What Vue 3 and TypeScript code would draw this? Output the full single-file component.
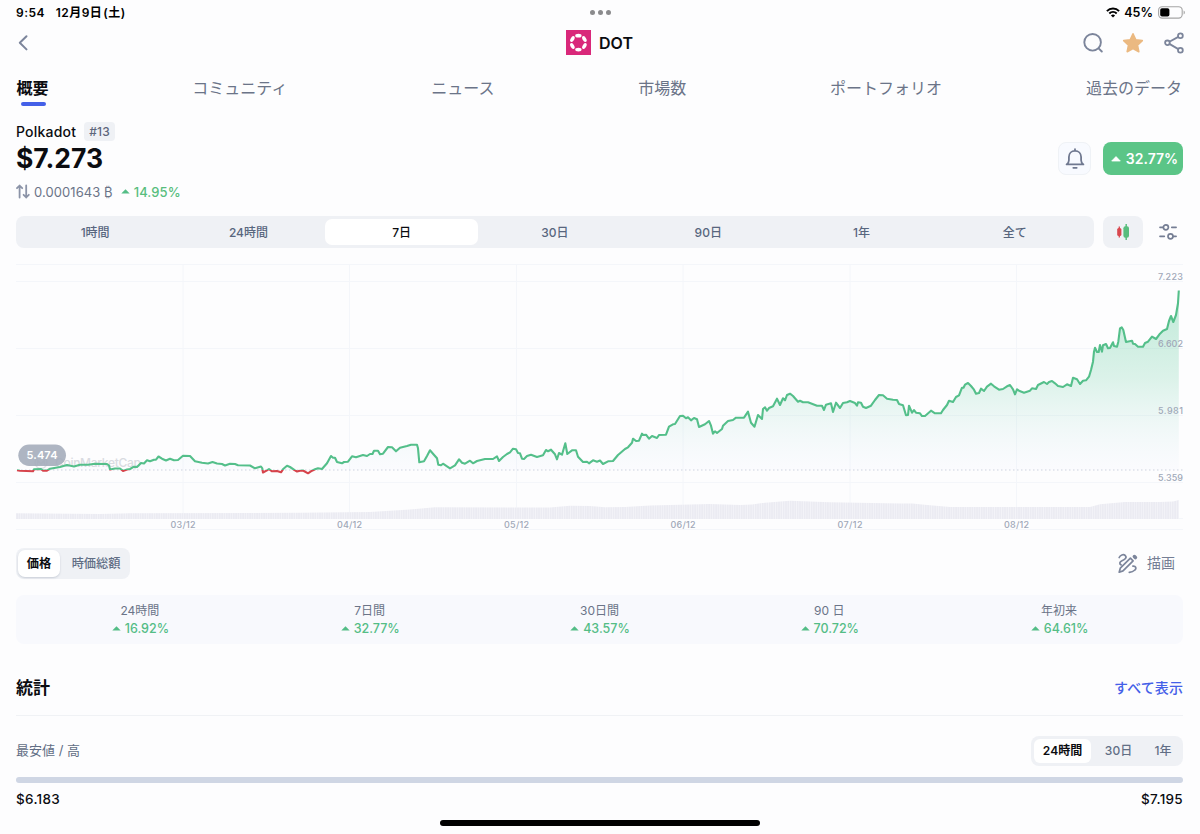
<script setup lang="ts">
interface Change {
  label: string
  value: string
}

const tabs: string[] = ['概要', 'コミュニティ', 'ニュース', '市場数', 'ポートフォリオ', '過去のデータ']
const ranges: string[] = ['1時間', '24時間', '7日', '30日', '90日', '1年', '全て']
const changes: Change[] = [
  { label: '24時間', value: '16.92%' },
  { label: '7日間', value: '32.77%' },
  { label: '30日間', value: '43.57%' },
  { label: '90 日', value: '70.72%' },
  { label: '年初来', value: '64.61%' },
]
const statRanges: string[] = ['24時間', '30日', '1年']

const dates = [
  { x: 183, label: '03/12' },
  { x: 349.5, label: '04/12' },
  { x: 516.5, label: '05/12' },
  { x: 683, label: '06/12' },
  { x: 850, label: '07/12' },
  { x: 1016.5, label: '08/12' },
]
const levels = [
  { y: 281.5, label: '7.223' },
  { y: 348.5, label: '6.602' },
  { y: 415.5, label: '5.981' },
  { y: 482.5, label: '5.359' },
]

const baseline = 470

const price =
  '17,470.3 20,470.8 33,471.3 34,469.3 41,469 43,470.6 47,470.6 50,468.7 60,467 67,465 74,466.5 80,464.7 88,464.7 95,463.7 107,464 109,465.5 110,469.5 115,468.5 120,468.5 123,470.9 127,469.5 130,469 134,466.7 137,467 141,463 144,463.5 147,460.3 150,461.3 154,459.7 156,459.7 158.5,456.5 162,458.7 166,460.5 170,458.7 174,460.3 178,460 183,455.8 190,456 195,461.3 202,462.7 208,463.5 212.5,462 217,463.5 222,464 225,465.5 230,463.7 235,464 238,465.3 250,465.5 255,468.3 261,466.5 262.3,468.3 263,472.5 267,470.4 269,469 272,471.3 277,471 281,472.3 283.5,468.7 287,465.7 290,467 295,470.3 297,471.5 300,470.7 303,470.5 308,473.3 312,470.7 315,469.3 318,468.3 322,469 327,463.3 331,456 333,457.7 335,457.7 337,462 342,463.3 344,462 348,461.7 352,456.3 356,457.3 363,455 367,456 370,454 372.5,454 374,450.7 378,450.7 380,454.3 383,453.7 388,447 392,447.3 396,451.3 400,447.7 407,446 411,444.7 417,444.7 418,448.3 419.3,462.3 424,461.3 427,456 430,450.3 433,453.7 437,458.3 438.3,464.7 441,465.3 443,463.7 447,466.3 450,468.3 455,465.3 459,459.3 462,462.7 465,463.7 470,460.7 473,463.3 477,461 485,459 493,459 497,456.3 499,461 503,457 507,454 510,452.3 513,448.7 516,449.3 518,453 520,453.3 522,458.7 524,459 527,456 531,454.7 537,457 543,455.3 546,450 548,451.3 551,449.7 555,454.3 557,459.3 559,453 562,454.7 565.3,443.3 567.3,454 572,450.3 576,450.3 578,456.7 583,462 587,461.7 589,463.3 593,460.3 597,461.7 600,460.5 603,464 608,461.3 613,461 618,455 625,449 628,447.3 632,442.7 633,438.7 636,441 639,440.7 642,433.7 643,435 646,434.7 649,438.7 652,436 657,438 659,435 666,434.7 669,426.7 673,424.3 675,424 680,416 683,415.7 686,418.3 688,417.3 691,420.3 694,418 697,419.3 699,427 705,424.3 709,421 711,425.7 713,433.7 715,431.3 717,433 722,429 723,425.7 728,421 733,420 736,417.7 744,417.7 748,411.7 751,422.7 754.5,426.7 758,415 762,419 763,409 765,407.3 767,410.7 769,408 773,406.3 777,398.7 780,405 783,398.3 785,400.3 787,395 790,393.7 793,396 798,401.7 800,400.7 803,402.3 808,402.3 817,405.7 822,405.7 824,410 826,404.7 831,403.3 833,412 836,402.7 840,408 843,403 847,402.3 850,401 855,403 857,405.7 858,402.3 861,402.7 863,406.7 866,408 871,405.7 875,400 879,395 883,395.3 887,398.7 893,399.7 897,400 899,404 903,405.3 906,415.3 908,415 909,405.7 912,412.7 914,410 916,412.7 920,413.3 922,416 925,416 931,410.7 935,413.3 941,413.3 943,410 947,405 949,400.7 953,402 956,397 959,395.3 962,387.7 963.5,387.7 965,384.7 968,383 971,386 974,389.7 976,393.7 979,393 981,388.7 984,391 987,386.7 991,383.7 994,386.3 999,389.7 1003,389 1007,386.3 1010,385 1013,389.3 1015,394.3 1017,389.3 1019,390.7 1024,392.7 1030,390.7 1032,388.3 1036,389 1038,385 1044,382 1047,384 1049,382 1052,381 1055,383.3 1058,386 1063,387 1067,384.3 1071,386 1073,377.7 1077,379.3 1080,384 1083,380.7 1086,380.3 1089,376.7 1091,370 1093,361.7 1094,351.7 1095,347.7 1097,352 1098.7,352 1100,345 1102,351.7 1103,345.3 1106,344 1108,348.3 1110,348 1113,342.3 1114,346 1117,346.7 1118.3,341.7 1120,328.3 1121.7,327.3 1123.3,330 1126,342 1132,340.7 1133,343.7 1135,344 1138,346.7 1143,346.7 1145,343 1148,341.7 1152,336.7 1156,339 1160,333.7 1163,330.7 1167,329 1169,321 1171,316 1173.3,322 1176,315 1178,303.3 1178.8,290.5'

const area = `17,${baseline} ${price} 1178.8,${baseline}`

const volume =
  '16,513.3 100,514 130,513.3 300,512.8 370,512 410,509.5 435,507.3 550,507.6 570,505.7 590,506 605,507.3 625,507 650,505.4 710,504 740,505 752,504.6 765,502.7 790,500.7 830,502.3 900,503.5 912,503.4 930,505.3 950,507 1090,507 1100,504.3 1125,502 1160,502 1173,501.4 1179,500'
</script>

<template>
  <main class="screen">
    <div class="status">
      <div class="status-left"><span>9:54</span><span class="date">12月9日<i>(土)</i></span></div>
      <div class="dots"><b></b><b></b><b></b></div>
      <div class="status-right">
        <svg width="14" height="11" viewBox="0 0 14 11">
          <g fill="none" stroke="#000" stroke-width="2">
            <path d="M0.9 4.1a8.7 8.7 0 0 1 12.2 0" />
            <path d="M3.3 6.5a5.3 5.3 0 0 1 7.4 0" />
          </g>
          <path d="M7 10.6L4.9 8.5a3 3 0 0 1 4.2 0z" />
        </svg>
        <span>45%</span>
        <svg width="28" height="13" viewBox="0 0 28 13">
          <rect x="0.6" y="0.7" width="23.6" height="11.4" rx="3.6" fill="none" stroke="#a5a5a5" stroke-width="1.1" />
          <rect x="2.2" y="2.3" width="9.2" height="8.2" rx="1.8" />
          <path d="M25.6 4.4c1.7.6 1.7 3.4 0 4z" fill="#a5a5a5" />
        </svg>
      </div>
    </div>

    <header class="header">
      <svg class="back" width="12" height="18" viewBox="0 0 12 18">
        <path d="M9.5 2.2L2.8 8.8l6.7 6.6" fill="none" stroke="#7c859b" stroke-width="2" stroke-linecap="round" stroke-linejoin="round" />
      </svg>
      <div class="coin">
        <svg width="25" height="25" viewBox="0 0 25 25">
          <rect width="25" height="25" fill="#d9287a" />
          <g fill="#fff">
            <ellipse cx="12.4" cy="5.7" rx="3.2" ry="1.9" />
            <ellipse cx="12.4" cy="19.6" rx="3.2" ry="1.9" />
            <ellipse cx="6.4" cy="9.1" rx="3.2" ry="1.8" transform="rotate(-60 6.4 9.1)" />
            <ellipse cx="18.4" cy="9.1" rx="3.2" ry="1.8" transform="rotate(60 18.4 9.1)" />
            <ellipse cx="6.4" cy="16.1" rx="3.2" ry="1.8" transform="rotate(60 6.4 16.1)" />
            <ellipse cx="18.4" cy="16.1" rx="3.2" ry="1.8" transform="rotate(-60 18.4 16.1)" />
          </g>
        </svg>
        <span>DOT</span>
      </div>
      <div class="actions">
        <svg width="20" height="20" viewBox="0 0 20 20" fill="none" stroke="#7c859b" stroke-width="1.9" stroke-linecap="round">
          <circle cx="9.6" cy="9.3" r="8.3" />
          <path d="M15.6 15.3l3.2 3.2" />
        </svg>
        <svg width="22" height="22" viewBox="0 0 22 22">
          <path d="M11 1.8l2.8 6 6.5.8-4.8 4.5 1.3 6.6L11 16.5l-5.8 3.2 1.3-6.6L1.700 8.600l6.500-.8z" fill="#ebb981" stroke="#ebb981" stroke-width="1.6" stroke-linejoin="round" />
        </svg>
        <svg width="20" height="22" viewBox="0 0 20 22" fill="none" stroke="#7c859b" stroke-width="1.8">
          <circle cx="3.4" cy="10.8" r="2.3" />
          <circle cx="16.4" cy="3.7" r="2.4" />
          <circle cx="16.4" cy="18.3" r="2.4" />
          <path d="M5.4 9.7l8.9-4.8M5.4 11.9l8.9 5.2" />
        </svg>
      </div>
    </header>

    <nav class="tabs">
      <span v-for="(tab, i) in tabs" :key="tab" :class="{ active: i === 0 }">{{ tab }}</span>
    </nav>

    <section class="summary">
      <div class="quote">
        <div class="name"><span>Polkadot</span><em>#13</em></div>
        <div class="price">$7.273</div>
        <div class="btc">
          <svg width="14" height="15" viewBox="0 0 14 15" fill="none" stroke="#8b93a7" stroke-width="1.8" stroke-linecap="round" stroke-linejoin="round">
            <path d="M3.6 13.6V1.6M1 4.2l2.6-2.7 2.6 2.7M10.2 1.4v12M7.6 10.8l2.6 2.7 2.6-2.7" />
          </svg>
          <span>0.0001643 ₿</span>
          <svg class="up" width="9" height="5" viewBox="0 0 9 5"><path d="M4.5.2L8.7 4.6H.3z" /></svg>
          <strong>14.95%</strong>
        </div>
      </div>
      <div class="summary-actions">
        <div class="bell">
          <svg width="20" height="22" viewBox="0 0 20 22" fill="none" stroke="#6f7890" stroke-width="1.8" stroke-linecap="round" stroke-linejoin="round">
            <path d="M10 1.2v1.6M1.6 16.4h16.8c-1.6-1.1-2.3-2.4-2.3-4.2V9c0-3.7-2.6-6.2-6.1-6.2S3.9 5.3 3.9 9v3.2c0 1.8-.7 3.1-2.3 4.2zM8.3 19.8h3.4" />
          </svg>
        </div>
        <div class="badge">
          <svg width="10" height="6" viewBox="0 0 10 6"><path d="M5 .6L9.3 5H.7z" fill="#fff" stroke="#fff" stroke-width=".8" stroke-linejoin="round" /></svg>
          <span>32.77%</span>
        </div>
      </div>
    </section>

    <section class="controls">
      <div class="segments">
        <span v-for="range in ranges" :key="range" :class="{ active: range === '7日' }">{{ range }}</span>
      </div>
      <div class="candles">
        <svg width="14" height="18" viewBox="0 0 14 18">
          <path d="M3.3 3.4v11.2" stroke="#d9474e" stroke-width="1.3" />
          <rect x="1.2" y="5" width="4.2" height="8" rx="1.6" fill="#d9474e" />
          <path d="M10.2 1v16" stroke="#58bd7d" stroke-width="1.5" />
          <rect x="7.4" y="3.2" width="5.6" height="11.6" rx="2" fill="#58bd7d" />
        </svg>
      </div>
      <svg class="sliders" width="18" height="18" viewBox="0 0 18 18" fill="none" stroke="#757e94" stroke-width="1.7" stroke-linecap="round">
        <circle cx="6.9" cy="4.3" r="2.5" />
        <circle cx="11.5" cy="13.3" r="2.5" />
        <path d="M1 4.3h3M12.8 4.3h4.3M1 13.3h4.3M14.3 13.3h2.8" />
      </svg>
    </section>

    <svg class="chart" width="1200" height="280" viewBox="0 258 1200 280">
      <defs>
        <linearGradient id="fill" x1="0" y1="290" x2="0" y2="470" gradientUnits="userSpaceOnUse">
          <stop offset="0" stop-color="#4fc593" stop-opacity=".36" />
          <stop offset="0.5" stop-color="#4fc593" stop-opacity=".19" />
          <stop offset="1" stop-color="#dfe6ff" stop-opacity=".08" />
        </linearGradient>
        <linearGradient id="stroke" x1="0" y1="290" x2="0" y2="650" gradientUnits="userSpaceOnUse">
          <stop offset="0.5" stop-color="#54bf8a" />
          <stop offset="0.5" stop-color="#d6434b" />
        </linearGradient>
        <pattern id="bars" width="2.33" height="40" patternUnits="userSpaceOnUse">
          <rect width="2.33" height="40" fill="#f3f3f8" />
          <rect width="1.5" height="40" fill="#ebebf2" />
        </pattern>
      </defs>
      <g stroke="#f4f6fa" stroke-width="1">
        <path d="M16 264.5H1183M16 529.5H1183M16 518.5H1183" />
        <path v-for="level in levels" :key="level.y" :d="`M16 ${level.y}H1183`" />
        <path v-for="date in dates" :key="date.x" :d="`M${date.x} 264V519`" />
      </g>
      <g class="watermark">
        <circle cx="41" cy="462.5" r="6" />
        <path d="M37.5 465v-5l3.5 4 3.5-4v5" />
        <text x="55" y="467" textLength="86">CoinMarketCap</text>
      </g>
      <polygon :points="`16,519 ${volume} 1179,519`" fill="url(#bars)" />
      <polygon :points="area" fill="url(#fill)" />
      <path :d="`M17 ${baseline}H1183`" stroke="#cdd3df" stroke-width="1" stroke-dasharray="1.5 2.5" />
      <polyline :points="price" fill="none" stroke="url(#stroke)" stroke-width="2.1" stroke-linejoin="round" />
      <rect x="18.3" y="444.5" width="47.7" height="21.5" rx="10.75" fill="#a3abba" fill-opacity=".88" />
      <text class="tag" x="42" y="458.9" text-anchor="middle" textLength="31">5.474</text>
      <g class="axis">
        <text v-for="level in levels" :key="level.label" x="1183" :y="level.y - 1.8" text-anchor="end" textLength="25">{{ level.label }}</text>
        <text v-for="date in dates" :key="date.label" :x="date.x" y="528" text-anchor="middle" textLength="25">{{ date.label }}</text>
      </g>
    </svg>

    <section class="toolbar">
      <div class="toggle">
        <span class="active">価格</span>
        <span>時価総額</span>
      </div>
      <div class="draw">
        <svg width="22" height="22" viewBox="0 0 22 22" fill="none" stroke="#7c859b" stroke-width="1.7" stroke-linecap="round" stroke-linejoin="round">
          <path d="M2.2 4.5C3.2 2 6.4.9 8.2 2.5c2.3 2.2-.6 4-3.2 5.2-2.6 1.2-2.9 3.4-.9 4.2" />
          <path d="M3.3 15.2L13.4 5.1l2.7 2.7L6 17.9l-3.8 1.3z" />
          <path d="M17.4 3.6l1 1" stroke-width="3.6" />
          <path d="M15.9 13.2c3-.3 3.9 2.2 2 3.8-1.6 1.5-3.7 2.2-5.6 2.4" />
        </svg>
        <span>描画</span>
      </div>
    </section>

    <section class="changes">
      <div v-for="change in changes" :key="change.label" class="change">
        <span>{{ change.label }}</span>
        <strong>
          <svg class="up" width="9" height="5" viewBox="0 0 9 5"><path d="M4.5.2L8.7 4.6H.3z" /></svg>{{ change.value }}
        </strong>
      </div>
    </section>

    <section class="stats-head">
      <h2>統計</h2>
      <a>すべて表示</a>
    </section>

    <section class="low-high">
      <span class="caption">最安値 / 高</span>
      <div class="stat-ranges">
        <span v-for="(range, i) in statRanges" :key="range" :class="{ active: i === 0 }">{{ range }}</span>
      </div>
    </section>
    <div class="bar"></div>
    <div class="bounds"><span>$6.183</span><span>$7.195</span></div>
    <div class="home"></div>
  </main>
</template>

<style>
body {
  margin: 0;
  background: #fdfdfe;
}
</style>

<style scoped>
.screen {
  box-sizing: border-box;
  width: 1200px;
  height: 834px;
  overflow: hidden;
  display: flex;
  flex-direction: column;
  background: #fdfdfe;
  color: #0b0c10;
  font-family: Inter, "Noto Sans CJK JP", sans-serif;
}
svg {
  display: block;
  flex: none;
}
.status {
  flex: none;
  display: grid;
  grid-template-columns: 1fr auto 1fr;
  align-items: center;
  height: 25px;
  padding: 0 16px;
  font-size: 12px;
  font-weight: 600;
  line-height: 16px;
  color: #000;
}
.status-left {
  display: flex;
  gap: 11px;
  letter-spacing: 0.45px;
}
.date i {
  font-style: normal;
  margin-left: 1px;
}
.dots {
  display: flex;
  gap: 3px;
}
.dots b {
  width: 5px;
  height: 5px;
  border-radius: 50%;
  background: #8b8b8d;
}
.status-right {
  display: flex;
  justify-content: flex-end;
  align-items: center;
  gap: 5px;
  margin-right: -2px;
}
.status-right span {
  margin-left: -1px;
  font-size: 12.5px;
}
.header {
  flex: none;
  display: grid;
  grid-template-columns: 1fr auto 1fr;
  align-items: center;
  height: 35px;
  margin-bottom: 1px;
  padding: 0 17px 0 16px;
}
.back {
  margin-left: 1px;
}
.coin {
  display: flex;
  align-items: center;
  gap: 8px;
  font-size: 16px;
  font-weight: 600;
  line-height: 24px;
}
.actions {
  display: flex;
  justify-content: flex-end;
  align-items: center;
  gap: 20px;
  margin-right: -1px;
}
.actions svg:first-child {
  margin-right: -1px;
}
.tabs {
  flex: none;
  display: flex;
  justify-content: space-between;
  height: 54px;
  padding: 0 18px 0 16.5px;
  font-size: 16px;
  line-height: 55px;
  color: #6b7488;
}
.tabs .active {
  position: relative;
  font-weight: 700;
  color: #0b0c10;
}
.tabs .active::after {
  content: "";
  position: absolute;
  left: 4px;
  bottom: 9px;
  width: 25px;
  height: 4px;
  border-radius: 2px;
  background: #4460e8;
}
.summary {
  flex: none;
  display: flex;
  justify-content: space-between;
  height: 101px;
  padding: 6px 17px 0 16px;
  box-sizing: border-box;
}
.name {
  display: flex;
  align-items: center;
  gap: 8px;
  height: 20px;
  font-size: 14px;
  font-weight: 500;
  letter-spacing: 0.2px;
}
.name em {
  padding: 0 5px;
  border-radius: 4px;
  background: #eff1f5;
  font-size: 12px;
  font-style: normal;
  line-height: 19px;
  color: #5d667b;
}
.price {
  height: 34px;
  font-size: 26.5px;
  font-weight: 700;
  line-height: 35px;
}
.btc {
  display: flex;
  align-items: center;
  height: 33px;
  font-size: 13px;
  letter-spacing: 0.08px;
  color: #6b7488;
}
.btc span {
  margin: 0 8px 0 4px;
}
.btc strong {
  margin-left: 4px;
  font-weight: 500;
  color: #58bd7d;
}
.up {
  fill: #54bd86;
}
.summary-actions {
  display: flex;
  gap: 12px;
  padding-top: 21px;
}
.bell,
.badge {
  display: flex;
  align-items: center;
  justify-content: center;
  box-sizing: border-box;
  height: 33px;
  border-radius: 8px;
}
.bell {
  width: 33px;
  border: 1px solid #eff2f6;
  background: #f8faff;
}
.badge {
  width: 80px;
  padding-left: 3px;
  gap: 5px;
  background: #5bc587;
  color: #fff;
  font-size: 14px;
  font-weight: 600;
}
.controls {
  flex: none;
  display: flex;
  align-items: center;
  height: 32px;
  padding: 0 16px;
}
.segments {
  display: flex;
  box-sizing: border-box;
  width: 1078px;
  height: 32px;
  padding: 3px 2.5px;
  border-radius: 8px;
  background: #eff1f5;
}
.segments span {
  flex: 1;
  border-radius: 7px;
  font-size: 12px;
  font-weight: 500;
  line-height: 27px;
  text-align: center;
  color: #58667e;
}
.segments .active {
  background: #fff;
  color: #0b0c10;
}
.candles {
  display: flex;
  align-items: center;
  justify-content: center;
  width: 40px;
  height: 32px;
  margin-left: 9px;
  border-radius: 8px;
  background: #eff1f5;
}
.sliders {
  margin-left: 16px;
}
.chart {
  margin-top: 10px;
}
.watermark {
  fill: none;
  stroke: #dfe1e6;
  stroke-width: 1.5;
}
.watermark text {
  fill: #d9dbe1;
  stroke: none;
  font-size: 12px;
  font-weight: 500;
}
.tag {
  fill: #fff;
  font-size: 11px;
  font-weight: 600;
}
.axis {
  fill: #a0a8b8;
  font-size: 9px;
  font-weight: 500;
}
.toolbar {
  flex: none;
  display: flex;
  justify-content: space-between;
  align-items: center;
  height: 31px;
  margin-top: 10px;
  padding: 0 24px 0 16px;
}
.toggle {
  display: flex;
  box-sizing: border-box;
  width: 114px;
  height: 31px;
  padding: 2px;
  border-radius: 8px;
  background: #eff1f5;
  font-size: 12.2px;
  font-weight: 500;
  line-height: 28px;
  text-align: center;
  color: #616e85;
}
.toggle span {
  flex: 1;
  padding-left: 4px;
}
.toggle .active {
  flex: 0 0 42px;
  padding: 0;
  border-radius: 7px;
  background: #fff;
  box-shadow: 0 1px 2px rgba(88, 102, 126, 0.25);
  font-weight: 600;
  color: #0b0c10;
}
.draw {
  display: flex;
  align-items: center;
  gap: 8px;
  margin-right: 1px;
  font-size: 14px;
  line-height: 20px;
  color: #757e94;
}
.draw span {
  margin-top: -2px;
}
.changes {
  flex: none;
  display: flex;
  box-sizing: border-box;
  height: 49px;
  margin: 16px 17px 0 16px;
  padding: 7px 9px 5px;
  border-radius: 8px;
  background: #f8f9fd;
}
.change {
  flex: 1;
  display: flex;
  flex-direction: column;
  align-items: center;
  font-size: 12px;
  line-height: 18px;
  color: #6b7488;
}
.change strong {
  display: flex;
  align-items: center;
  gap: 4px;
  margin-left: 1px;
  font-weight: 500;
  font-size: 12.5px;
  color: #54bd86;
}
.change .up {
  margin-top: -1px;
}
.stats-head {
  flex: none;
  display: flex;
  justify-content: space-between;
  align-items: center;
  box-sizing: border-box;
  height: 56px;
  margin: 16px 17px 0 16px;
  border-bottom: 1px solid #f0f2f5;
}
.stats-head h2 {
  margin: 0;
  font-size: 17px;
  font-weight: 700;
  line-height: 24px;
}
.stats-head a {
  font-size: 14px;
  font-weight: 500;
  line-height: 24px;
  letter-spacing: 0.1px;
  color: #4460e8;
}
.low-high {
  flex: none;
  display: flex;
  justify-content: space-between;
  align-items: center;
  height: 30px;
  margin: 20px 17px 0 16px;
}
.caption {
  margin-top: -2px;
  font-size: 13px;
  line-height: 20px;
  color: #616e85;
}
.stat-ranges {
  display: flex;
  box-sizing: border-box;
  width: 152px;
  height: 30px;
  padding: 3px;
  border-radius: 8px;
  background: #eff1f5;
  font-size: 12px;
  font-weight: 500;
  line-height: 24px;
  text-align: center;
  color: #616e85;
}
.stat-ranges span {
  flex: 0 0 34px;
}
.stat-ranges span:nth-child(2) {
  flex: 1;
}
.stat-ranges .active {
  flex: 0 0 57px;
  border-radius: 6px;
  background: #fff;
  font-weight: 600;
  color: #0b0c10;
}
.bar {
  flex: none;
  height: 6px;
  margin: 11px 17px 0 16px;
  border-radius: 3px;
  background: #cfd6e4;
}
.bounds {
  flex: none;
  display: flex;
  justify-content: space-between;
  height: 20px;
  margin: 6px 17px 0 16px;
  font-size: 13.5px;
  font-weight: 500;
  line-height: 20px;
  letter-spacing: 0.3px;
}
.home {
  flex: none;
  align-self: center;
  width: 320px;
  height: 6px;
  margin-top: 11px;
  border-radius: 3px;
  background: #000;
}
</style>
